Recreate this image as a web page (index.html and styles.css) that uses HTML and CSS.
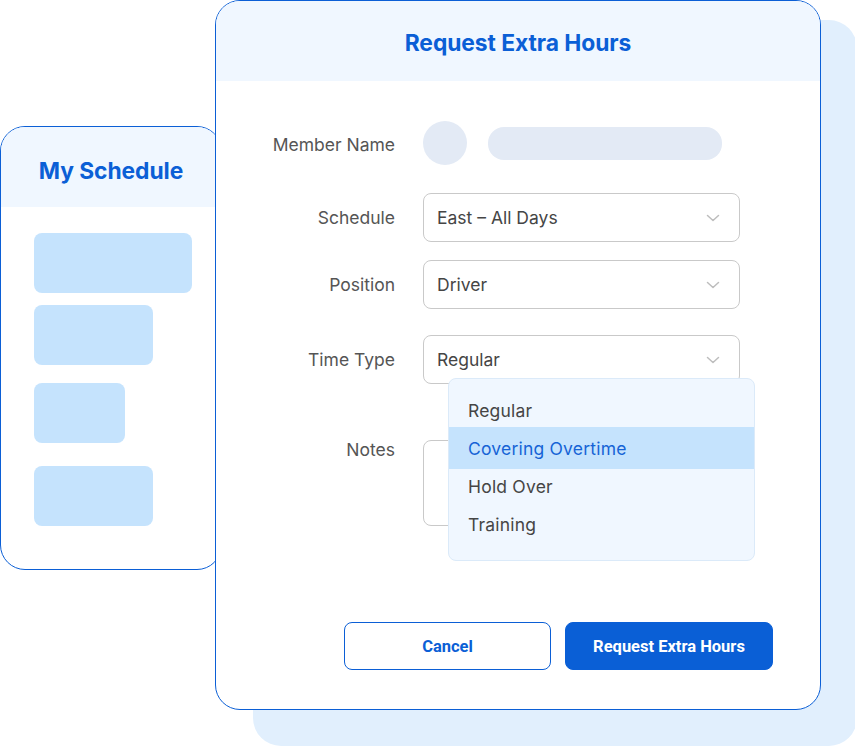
FILE: index.html
```html
<!DOCTYPE html>
<html lang="en">
<head>
<meta charset="utf-8">
<title>Request Extra Hours</title>
<link rel="stylesheet" href="styles.css">
</head>
<body>
<div class="stage">
  <div class="backdrop"></div>

  <section class="card schedule-card">
    <header class="card-head"><h2 class="card-title">My Schedule</h2></header>
    <div class="shift-list">
      <div class="shift shift-1"></div>
      <div class="shift shift-2"></div>
      <div class="shift shift-3"></div>
      <div class="shift shift-4"></div>
    </div>
  </section>

  <section class="card request-card">
    <header class="card-head"><h1 class="card-title">Request Extra Hours</h1></header>

    <div class="form">
      <div class="row row-member">
        <span class="label">Member Name</span>
        <div class="member">
          <span class="avatar"></span>
          <span class="name-bar"></span>
        </div>
      </div>

      <div class="row row-schedule">
        <span class="label">Schedule</span>
        <div class="select">
          <span class="select-value">East – All Days</span>
          <svg class="chevron" width="14" height="8" viewBox="0 0 14 8"><path d="M1.5 1.5l5.5 5 5.5-5" fill="none" stroke="#bdbdbd" stroke-width="1.5" stroke-linecap="round" stroke-linejoin="round"/></svg>
        </div>
      </div>

      <div class="row row-position">
        <span class="label">Position</span>
        <div class="select">
          <span class="select-value">Driver</span>
          <svg class="chevron" width="14" height="8" viewBox="0 0 14 8"><path d="M1.5 1.5l5.5 5 5.5-5" fill="none" stroke="#bdbdbd" stroke-width="1.5" stroke-linecap="round" stroke-linejoin="round"/></svg>
        </div>
      </div>

      <div class="row row-time">
        <span class="label">Time Type</span>
        <div class="field-wrap">
          <div class="select">
            <span class="select-value">Regular</span>
            <svg class="chevron" width="14" height="8" viewBox="0 0 14 8"><path d="M1.5 1.5l5.5 5 5.5-5" fill="none" stroke="#bdbdbd" stroke-width="1.5" stroke-linecap="round" stroke-linejoin="round"/></svg>
          </div>
          <ul class="menu">
            <li class="menu-item">Regular</li>
            <li class="menu-item is-active">Covering Overtime</li>
            <li class="menu-item">Hold Over</li>
            <li class="menu-item">Training</li>
          </ul>
        </div>
      </div>

      <div class="row row-notes">
        <span class="label">Notes</span>
        <div class="textarea"></div>
      </div>
    </div>

    <footer class="actions">
      <button class="btn btn-outline">Cancel</button>
      <button class="btn btn-primary">Request Extra Hours</button>
    </footer>
  </section>
</div>
</body>
</html>
```

FILE: styles.css
```css
* { box-sizing: border-box; }

html, body {
  margin: 0;
  padding: 0;
  background: #ffffff;
}

body {
  font-family: Inter, "Noto Sans", "Liberation Sans", sans-serif;
  color: #4a4a4a;
}

.stage {
  position: relative;
  width: 855px;
  height: 746px;
  overflow: hidden;
}

/* Free-canvas layers */
.backdrop {
  position: absolute;
  left: 253px;
  top: 20px;
  width: 604px;
  height: 726px;
  background: #e1effd;
  border-radius: 28px;
}

.card {
  position: absolute;
  background: #ffffff;
  border: 1px solid #0b5fd6;
  border-radius: 25px;
  overflow: hidden;
  display: flex;
  flex-direction: column;
}

.card-head {
  height: 80px;
  flex: none;
  background: #f0f7ff;
  display: flex;
  align-items: center;
  justify-content: center;
}

.card-title {
  margin: 0;
  font-size: 22.8px;
  font-weight: 700;
  color: #0b5fd6;
  letter-spacing: -0.05px;
}

/* Left card */
.schedule-card {
  left: 0;
  top: 126px;
  width: 222px;
  height: 444px;
}

.schedule-card .card-head {
  padding-top: 6px;
}

.shift-list {
  display: flex;
  flex-direction: column;
  align-items: flex-start;
  padding: 26px 0 0 33px;
}

.shift {
  height: 60px;
  background: #c5e3fd;
  border-radius: 8px;
}

.shift-1 { width: 158px; }
.shift-2 { width: 119px; margin-top: 12px; }
.shift-3 { width: 91px; margin-top: 18px; }
.shift-4 { width: 119px; margin-top: 23px; }

/* Main card */
.request-card {
  left: 215px;
  top: 0;
  width: 606px;
  height: 710px;
}

.request-card .card-head {
  padding-top: 2px;
}

.form {
  display: flex;
  flex-direction: column;
  padding: 40px 80px 0 0;
}

.row {
  display: grid;
  grid-template-columns: 1fr 317px;
  column-gap: 28px;
  align-items: center;
}

.row-schedule { margin-top: 28px; }
.row-position { margin-top: 18px; }
.row-time { margin-top: 26px; }
.row-notes { margin-top: 56px; align-items: start; }

.label {
  text-align: right;
  font-size: 17.5px;
  line-height: 20px;
  color: #555555;
}

.row-member .label { padding-top: 3px; }

.member {
  display: flex;
  align-items: center;
  gap: 21px;
}

.avatar {
  width: 44px;
  height: 44px;
  border-radius: 50%;
  background: #e3eaf5;
}

.name-bar {
  width: 234px;
  height: 33px;
  border-radius: 16px;
  background: #e3eaf5;
}

.field-wrap {
  position: relative;
}

.select {
  height: 49px;
  border: 1px solid #c9c9c9;
  border-radius: 8px;
  background: #ffffff;
  display: flex;
  align-items: center;
  justify-content: space-between;
  padding: 0 19px 0 13px;
}

.select-value {
  font-size: 17.5px;
  color: #454545;
}

.chevron {
  display: block;
}

.textarea {
  height: 86px;
  border: 1px solid #c9c9c9;
  border-radius: 8px;
  background: #ffffff;
}

/* Open dropdown overlay */
.menu {
  position: absolute;
  left: 25px;
  top: 43px;
  width: 307px;
  height: 183px;
  margin: 0;
  padding: 12px 0 0 0;
  list-style: none;
  background: #f0f7ff;
  border: 1px solid #dbeaf9;
  border-radius: 8px;
  z-index: 2;
}

.menu-item {
  height: 38px;
  display: flex;
  align-items: center;
  padding-left: 19px;
  font-size: 17.5px;
  letter-spacing: 0.2px;
  color: #454545;
}

.menu-item.is-active {
  height: 42px;
  margin: -2px 0;
  background: #c5e3fd;
  color: #1663d6;
}

/* Footer */
.actions {
  margin-top: auto;
  display: flex;
  justify-content: flex-end;
  gap: 14px;
  padding: 0 47px 39px 0;
}

.btn {
  width: 208px;
  height: 48px;
  border-radius: 8px;
  font-family: Roboto, "Liberation Sans", sans-serif;
  font-size: 16.5px;
  font-weight: 700;
  cursor: pointer;
}

.btn-outline {
  width: 207px;
  background: #ffffff;
  border: 1px solid #0b5fd6;
  color: #0b5fd6;
}

.btn-primary {
  background: #0a5fd6;
  border: 1px solid #0a5fd6;
  color: #ffffff;
}
```
